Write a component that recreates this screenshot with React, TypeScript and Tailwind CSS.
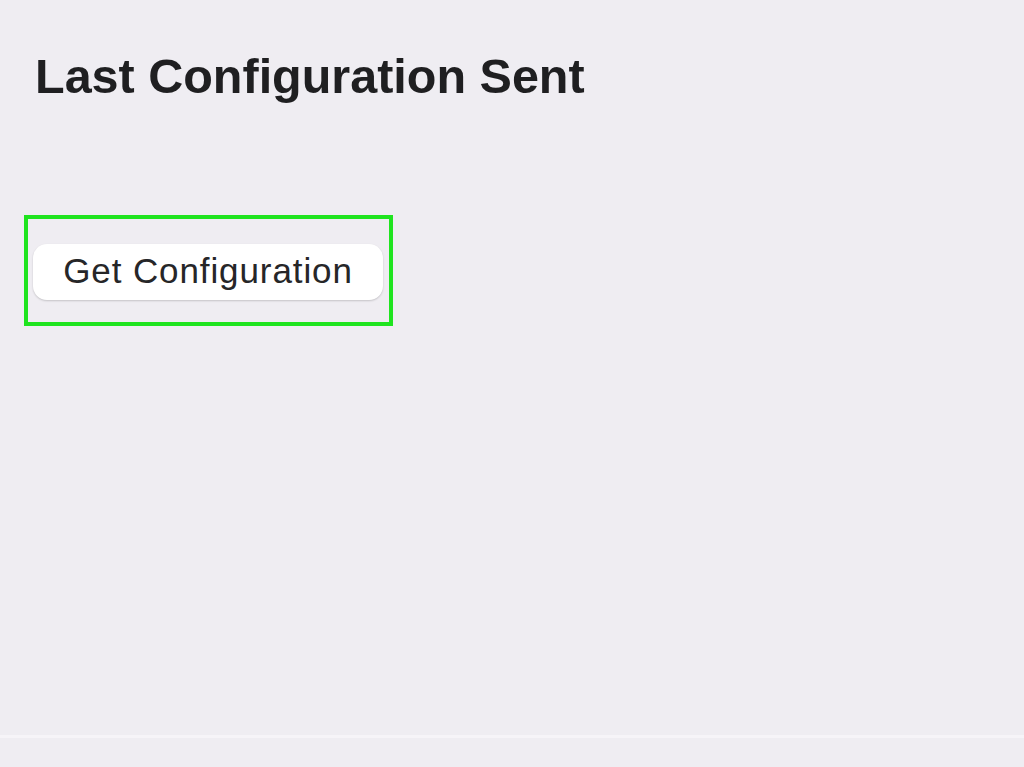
import React from 'react';

const App = () => {
  return (
    <div
      className="w-[1024px] h-[767px] bg-[#efedf2] flex flex-col overflow-hidden"
      style={{ fontFamily: '"Liberation Sans", Arial, sans-serif' }}
    >
      {/* Title */}
      <div className="pl-[35px] pt-[52px]">
        <h1 className="text-[48.5px] leading-none font-bold text-[#1f1f21]">Last Configuration Sent</h1>
      </div>

      {/* Highlighted button */}
      <div className="pl-[24px] pt-[114px]">
        <div className="w-[369px] h-[111px] border-[4px] border-[#1fe41f] pl-[5px] pt-[25px]">
          <button className="w-[350px] h-[56px] bg-white rounded-[14px] shadow-[0_1px_2px_rgba(0,0,0,0.18)] text-[35px] text-[#262628] tracking-[0.9px] flex items-center justify-center">
            Get Configuration
          </button>
        </div>
      </div>

      <div className="flex-1" />

      {/* Bottom divider */}
      <div className="h-[32px] border-t-[3px] border-[#f6f4f8]" />
    </div>
  );
};

export default App;
